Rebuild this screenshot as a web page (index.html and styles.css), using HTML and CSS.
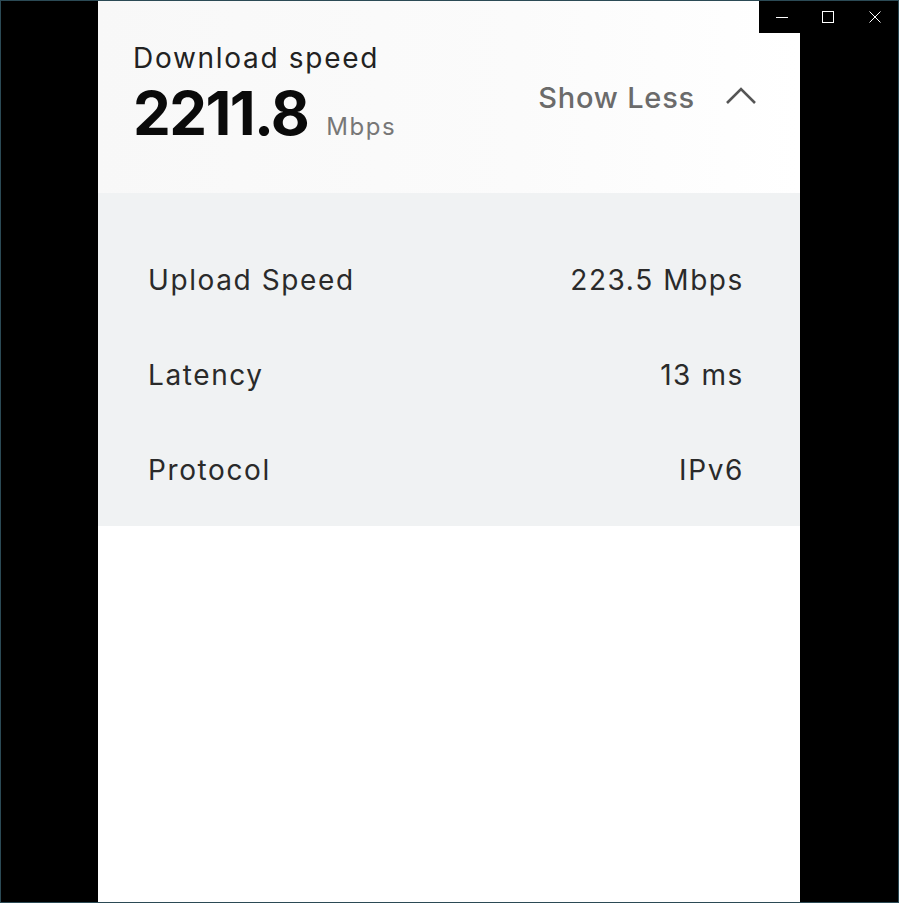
FILE: index.html
```html
<html>
    <head>
        <link rel="stylesheet" href="styles.css">
    </head>
    <body>
        <div class="controls">
            <span class="ctl"><svg width="14" height="14" viewBox="0 0 14 14"><path d="M1 7.5H13" stroke="#fff" stroke-width="1"/></svg></span>
            <span class="ctl"><svg width="14" height="14" viewBox="0 0 14 14"><rect x="1.5" y="1.5" width="11" height="11" fill="none" stroke="#fff" stroke-width="1"/></svg></span>
            <span class="ctl"><svg width="14" height="14" viewBox="0 0 14 14"><path d="M1.5 1.5L12.5 12.5M12.5 1.5L1.5 12.5" stroke="#fff" stroke-width="1"/></svg></span>
        </div>
        <div class="panel">
            <div class="header">
                <div class="download">
                    <div class="dlLabel">Download speed</div>
                    <div class="dlValue"><span class="num">2211.8</span><span class="unit">Mbps</span></div>
                </div>
                <div class="toggle">
                    <span>Show Less</span>
                    <svg width="32" height="20" viewBox="0 0 32 20"><path d="M2 17L16 3L30 17" fill="none" stroke="#555" stroke-width="2.6"/></svg>
                </div>
            </div>
            <div class="details">
                <div class="row"><span>Upload Speed</span><span>223.5 Mbps</span></div>
                <div class="row"><span>Latency</span><span>13 ms</span></div>
                <div class="row"><span>Protocol</span><span>IPv6</span></div>
            </div>
        </div>
    </body>
</html>
```
FILE: styles.css
```css
html, body{
    margin: 0;
    height: 100%;
}
body{
    box-sizing: border-box;
    border: 1px solid #2b4a55;
    background-color: black;
    font-family: Inter, "Noto Sans", sans-serif;
    position: relative;
    overflow: hidden;
}
.controls{
    position: absolute;
    top: 0;
    right: 0;
    width: 139px;
    height: 32px;
    background-color: black;
    display: flex;
}
.ctl{
    flex: 1;
    display: flex;
    align-items: center;
    justify-content: center;
}
.panel{
    margin-left: 97px;
    width: 702px;
    height: 100%;
    background-color: white;
}
.header{
    height: 192px;
    box-sizing: border-box;
    padding: 40px 43px 0 35px;
    background: linear-gradient(90deg, #f8f8f8, #fbfbfb 60%, #ffffff);
    display: flex;
    justify-content: space-between;
}
.dlLabel{
    font-size: 28px;
    line-height: 34px;
    color: #222;
    letter-spacing: 1.7px;
}
.dlValue{
    display: flex;
    align-items: baseline;
    margin-top: 8px;
}
.num{
    font-size: 60px;
    line-height: 60px;
    font-weight: 700;
    color: #0a0a0a;
    letter-spacing: -1.6px;
}
.unit{
    font-size: 24px;
    color: #777;
    margin-left: 18px;
    letter-spacing: 1.6px;
}
.toggle{
    display: flex;
    align-items: center;
    height: 40px;
    margin-top: 36px;
    font-size: 29px;
    font-weight: 500;
    color: #6b6b6b;
    letter-spacing: 0.8px;
    gap: 30px;
}
.toggle svg{
    margin-top: -3px;
}
.details{
    background-color: #f0f2f3;
    height: 333px;
    box-sizing: border-box;
    padding: 70px 56px 0 50px;
}
.row{
    display: flex;
    justify-content: space-between;
    height: 95px;
    font-size: 28px;
    color: #2a2a2a;
    letter-spacing: 1.6px;
}
```
